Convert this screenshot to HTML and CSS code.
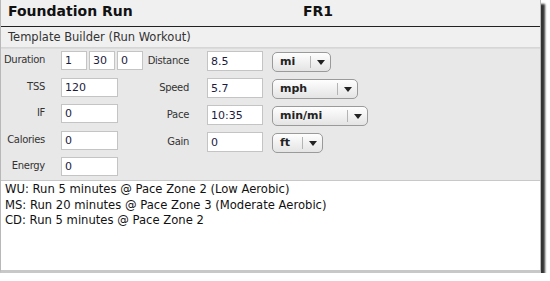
FILE: index.html
```html
<!DOCTYPE html>
<html>
<head>
    <title>Foundation Run</title>
    <link rel="stylesheet" href="styles.css">
</head>
    <body>
        <div class="window">
            <div class="title-bar">
                <h1>Foundation Run</h1>
                <span class="code">FR1</span>
            </div>
            <div class="subtitle">Template Builder (Run Workout)</div>

            <div class="builder">
                <div class="col-left">
                    <label>Duration</label>
                    <div class="duration">
                        <input type="text" class="short" value="1">
                        <input type="text" class="short" value="30">
                        <input type="text" class="short" value="0">
                    </div>
                    <label>TSS</label>
                    <input type="text" class="medium" value="120">
                    <label>IF</label>
                    <input type="text" class="medium" value="0">
                    <label>Calories</label>
                    <input type="text" class="medium" value="0">
                    <label>Energy</label>
                    <input type="text" class="medium" value="0">
                </div>

                <div class="col-right">
                    <label>Distance</label>
                    <input type="text" class="medium" value="8.5">
                    <div class="select select-mi"><span>mi</span><i class="arrow"></i></div>

                    <label>Speed</label>
                    <input type="text" class="medium" value="5.7">
                    <div class="select select-mph"><span>mph</span><i class="arrow"></i></div>

                    <label>Pace</label>
                    <input type="text" class="medium" value="10:35">
                    <div class="select select-pace"><span>min/mi</span><i class="arrow"></i></div>

                    <label>Gain</label>
                    <input type="text" class="medium" value="0">
                    <div class="select select-ft"><span>ft</span><i class="arrow"></i></div>
                </div>
            </div>

            <div class="notes">
                <p>WU: Run 5 minutes @ Pace Zone 2 (Low Aerobic)</p>
                <p>MS: Run 20 minutes @ Pace Zone 3 (Moderate Aerobic)</p>
                <p>CD: Run 5 minutes @ Pace Zone 2</p>
            </div>
        </div>
    </body>
</html>
```

FILE: styles.css
```css
body {
    margin: 0;
    background: #fff;
    font-family: "DejaVu Sans", Verdana, sans-serif;
    color: #222;
}
.window {
    width: 541px;
    box-sizing: border-box;
    border: 1px solid #b8b8b8;
    border-top: none;
    border-bottom: 3px solid #c8c8c8;
    background: #f0f0f0;
    box-shadow: 4px 4px 2px rgba(0, 0, 0, 0.8);
}
.title-bar {
    display: flex;
    height: 26px;
    border-bottom: 1px solid #222;
    padding-left: 7px;
}
h1 {
    margin: 3px 0 0;
    width: 295px;
    font-size: 14px;
    font-weight: bold;
    color: #111;
}
.code {
    margin-top: 3px;
    font-size: 14px;
    font-weight: bold;
    color: #111;
}
.subtitle {
    height: 20px;
    line-height: 20px;
    padding-left: 7px;
    font-size: 11.5px;
    color: #333;
    border-bottom: 1px solid #d6d6d6;
}
.builder {
    display: flex;
    height: 129px;
    padding-top: 2px;
    background: #e8e8e8;
    border-top: 1px solid #dcdcdc;
    font-size: 10px;
    letter-spacing: -0.3px;
    color: #333;
}
.col-left {
    display: grid;
    grid-template-columns: 44px 82px;
    column-gap: 16px;
    row-gap: 7.5px;
    grid-auto-rows: 19px;
    align-items: center;
    width: 138px;
    flex-shrink: 0;
}
.col-right {
    display: grid;
    grid-template-columns: 50px 56px auto;
    column-gap: 18px;
    row-gap: 7px;
    grid-auto-rows: 20px;
    align-items: center;
    align-content: start;
}
label {
    justify-self: end;
    white-space: nowrap;
    margin-top: -2px;
}
input {
    box-sizing: border-box;
    height: 100%;
    padding: 0 3px;
    border: 1px solid #c4c4c4;
    background: #fff;
    font-family: "DejaVu Sans", Verdana, sans-serif;
    font-size: 11px;
    letter-spacing: 0;
    color: #1c1c40;
    outline: none;
}
.duration {
    display: flex;
    gap: 2px;
    height: 100%;
}
.short {
    width: 26px;
}
.col-left .medium {
    width: 57px;
}
.col-right .medium {
    width: 56px;
}
.select {
    display: flex;
    box-sizing: border-box;
    height: 20px;
    margin-left: -9px;
    margin-top: 1px;
    border: 1px solid #9a9a9a;
    border-radius: 5px;
    background: linear-gradient(#fefefe, #e4e4e4);
    font-size: 11px;
    font-weight: bold;
    letter-spacing: 0;
    color: #222;
}
.select span {
    flex: 1;
    padding-left: 7px;
    border-right: 1px solid #b4b4b4;
    margin: 3px 0;
    line-height: 12px;
}
.arrow {
    width: 19px;
    position: relative;
}
.arrow::after {
    content: "";
    position: absolute;
    left: 6px;
    top: 7px;
    border-left: 4px solid transparent;
    border-right: 4px solid transparent;
    border-top: 5px solid #222;
}
.select-mi {
    width: 59px;
}
.select-mph {
    width: 86px;
}
.select-pace {
    width: 96px;
}
.select-ft {
    width: 51px;
}
.notes {
    height: 88px;
    padding: 1px 4px 0;
    background: #fff;
    border-top: 1px solid #c8c8c8;
    font-size: 11.6px;
    line-height: 15.5px;
    color: #111;
}
.notes p {
    margin: 0;
}
```
